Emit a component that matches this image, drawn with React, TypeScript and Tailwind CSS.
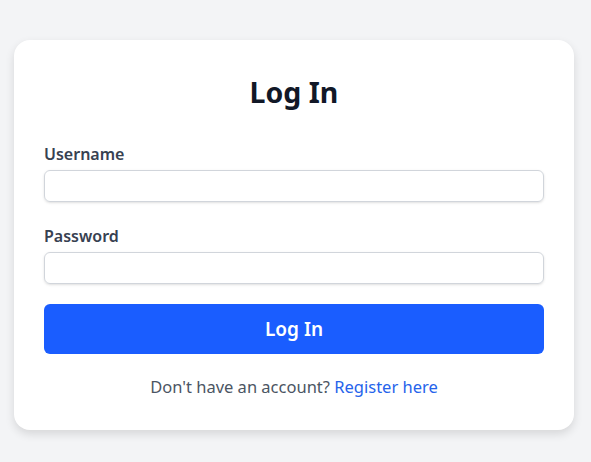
export default function App() {
  return (
    <div
      className="min-h-screen bg-[#f3f4f6] pt-10 pl-[14px]"
      style={{ fontFamily: '"Noto Sans", "Open Sans", sans-serif' }}
    >
      <div className="w-[560px] rounded-2xl bg-white px-[30px] pt-[34px] pb-[31px] shadow-[0_4px_10px_rgba(0,0,0,0.12)]">
        <h1 className="text-center text-[28.5px] font-bold leading-9 text-[#111827]">Log In</h1>

        <form className="mt-[32px]" onSubmit={(e) => e.preventDefault()}>
          <label className="block text-[16px] font-semibold leading-6 text-[#374151]">Username</label>
          <input
            type="text"
            className="mt-[4px] block h-[32px] w-full rounded-md border border-[#d1d5db] shadow-sm outline-none"
          />

          <label className="mt-[22px] block text-[16px] font-semibold leading-6 text-[#374151]">Password</label>
          <input
            type="password"
            className="mt-[4px] block h-[32px] w-full rounded-md border border-[#d1d5db] shadow-sm outline-none"
          />

          <button
            type="submit"
            className="mt-[20px] h-[50px] w-full rounded-md bg-[#1a5dff] text-[19px] font-semibold text-white"
          >
            Log In
          </button>
        </form>

        <p className="mt-[21px] text-center text-[16.5px] leading-6 text-[#4b5563]">
          Don't have an account?{" "}
          <a href="#" className="text-[#2563eb]">
            Register here
          </a>
        </p>
      </div>
    </div>
  );
}
